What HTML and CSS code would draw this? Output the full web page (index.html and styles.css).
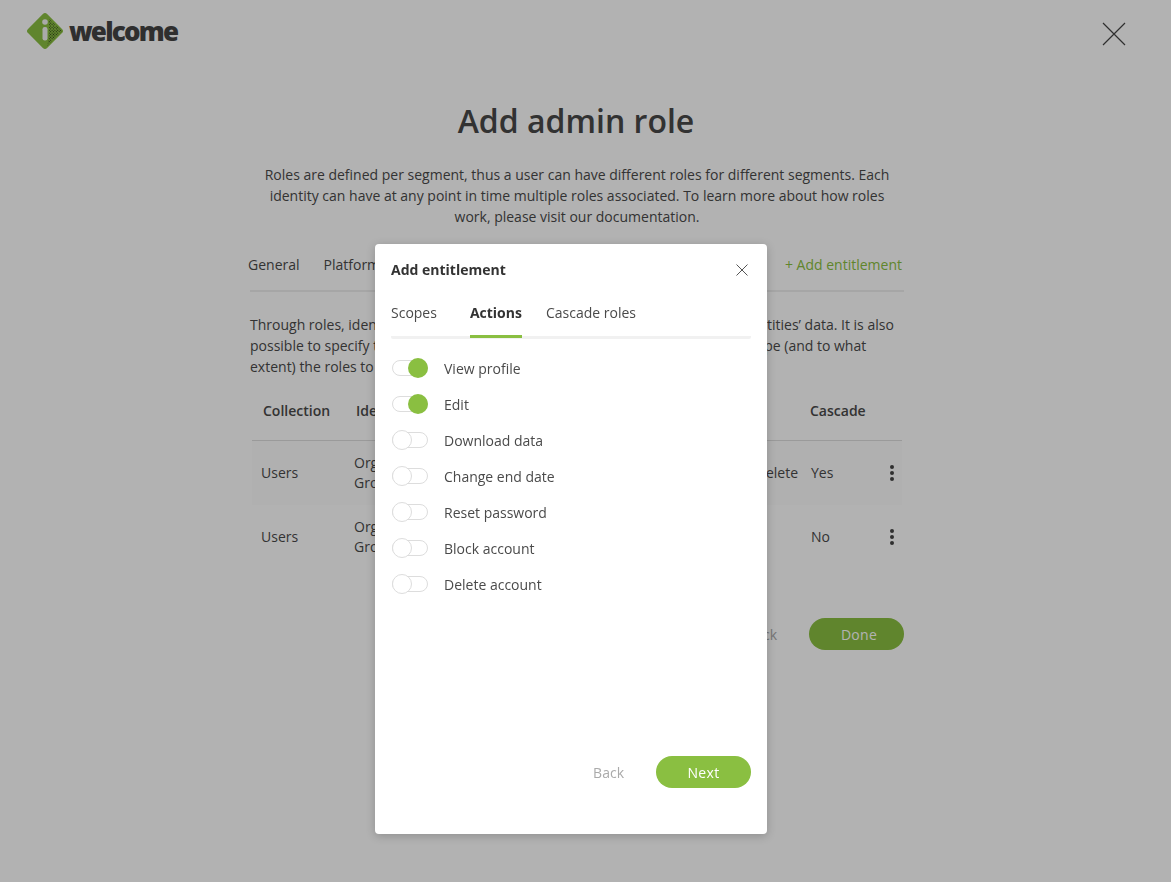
FILE: index.html
```html
<!DOCTYPE html>
<html>
  <head>
    <meta charset="utf-8">
    <meta name="viewport" content="width=device-width">
    <title>Add admin role</title>
    <link rel="stylesheet" href="styles.css">
  </head>
  <body>
    <header class="top-bar">
      <div class="logo">
        <svg class="logo-mark" width="40" height="40" viewBox="0 0 40 40">
          <defs>
            <pattern id="dots" width="2" height="2" patternUnits="userSpaceOnUse">
              <rect width="1" height="1" fill="#2c3d1a"></rect>
            </pattern>
            <clipPath id="right-half">
              <path d="M24 8 L37 20 L22 35 L23 31 L24 20 Z"></path>
            </clipPath>
          </defs>
          <rect x="6.5" y="6.5" width="27" height="27" rx="3" transform="rotate(45 20 20)" fill="#8abf41"></rect>
          <g clip-path="url(#right-half)">
            <rect x="6.5" y="6.5" width="27" height="27" rx="3" transform="rotate(45 20 20)" fill="url(#dots)"></rect>
          </g>
          <circle cx="20" cy="11" r="2.8" fill="#f4f4f4"></circle>
          <rect x="17.5" y="16" width="5" height="13.5" rx="2.2" fill="#f4f4f4"></rect>
        </svg>
        <span class="logo-text">welcome</span>
      </div>
      <button class="page-close" aria-label="Close">
        <svg width="24" height="24" viewBox="0 0 24 24"><path d="M1 1 L23 23 M23 1 L1 23" stroke="#444" stroke-width="1.2" fill="none"></path></svg>
      </button>
    </header>

    <main class="content">
      <h1>Add admin role</h1>
      <p class="intro">Roles are defined per segment, thus a user can have different roles for different segments. Each identity can have at any point in time multiple roles associated. To learn more about how roles work, please visit our documentation.</p>

      <div class="page-tabs">
        <span>General</span>
        <span>Platform</span>
        <span class="add-link">+ Add entitlement</span>
      </div>

      <p class="desc">Through roles, identities can be granted rights to other identities and to all identities’ data. It is also<br>possible to specify the actions each role is allowed to perform on one given scope (and to what<br>extent) the roles to be cascaded.</p>

      <div class="table">
        <div class="row head">
          <div>Collection</div>
          <div>Identity</div>
          <div></div>
          <div>Cascade</div>
          <div></div>
        </div>
        <div class="row shaded">
          <div class="cell-name">Users</div>
          <div>Organization<br>Group</div>
          <div class="cell-actions">View, Edit, Delete</div>
          <div class="cell-cascade">Yes</div>
          <div class="more"><i></i><i></i><i></i></div>
        </div>
        <div class="row">
          <div class="cell-name">Users</div>
          <div>Organization<br>Group</div>
          <div class="cell-actions"></div>
          <div class="cell-cascade">No</div>
          <div class="more"><i></i><i></i><i></i></div>
        </div>
      </div>

      <div class="page-actions">
        <span class="link-back">Back</span>
        <span class="btn btn-done">Done</span>
      </div>
    </main>

    <div class="overlay"></div>

    <section class="modal">
      <div class="modal-head">
        <h2>Add entitlement</h2>
        <svg class="modal-close" width="12" height="12" viewBox="0 0 12 12"><path d="M0.5 0.5 L11.5 11.5 M11.5 0.5 L0.5 11.5" stroke="#555" stroke-width="1" fill="none"></path></svg>
      </div>
      <div class="modal-tabs">
        <span class="tab">Scopes</span>
        <span class="tab active">Actions</span>
        <span class="tab">Cascade roles</span>
      </div>
      <ul class="toggles">
        <li><span class="toggle on"></span>View profile</li>
        <li><span class="toggle on"></span>Edit</li>
        <li><span class="toggle"></span>Download data</li>
        <li><span class="toggle"></span>Change end date</li>
        <li><span class="toggle"></span>Reset password</li>
        <li><span class="toggle"></span>Block account</li>
        <li><span class="toggle"></span>Delete account</li>
      </ul>
      <div class="modal-actions">
        <span class="link-back">Back</span>
        <span class="btn">Next</span>
      </div>
    </section>
  </body>
</html>
```

FILE: styles.css
```css
html, body {
  margin: 0;
  height: 100%;
}

body {
  height: 882px;
  overflow: hidden;
  background-color: #fff;
  color: #4a4a4a;
  font-family: "Open Sans", sans-serif;
  font-size: 14px;
  line-height: 21px;
}

.top-bar {
  display: flex;
  justify-content: space-between;
  height: 64px;
  padding: 11px 45px 0 25px;
  box-sizing: border-box;
}

.logo {
  display: flex;
  align-items: center;
  height: 40px;
  gap: 4px;
}

.logo-text {
  font-size: 26px;
  font-weight: 800;
  letter-spacing: -1.8px;
  color: #444;
  line-height: 42px;
}

.page-close {
  border: 0;
  padding: 0;
  margin-top: 11px;
  height: 24px;
  background: none;
}

.content {
  width: 654px;
  margin-left: 250px;
}

h1 {
  margin: 33px 0 0;
  text-align: center;
  font-size: 32px;
  line-height: 48px;
  font-weight: 600;
  color: #484848;
  padding-right: 2px;
}

.intro {
  width: 640px;
  margin: 19px auto 0;
  text-align: center;
}

.page-tabs {
  display: flex;
  gap: 24px;
  margin: 27px 0 0 -2px;
  padding-right: 2px;
  height: 36px;
}

.add-link {
  margin-left: auto;
  color: #8abf41;
}

.page-tabs + .desc {
  border-top: 2px solid #eee;
  margin: 0;
  padding-top: 22px;
}

.table {
  margin: 9px 2px 0;
}

.row {
  display: grid;
  grid-template-columns: 93px 180px 274px 69px 17px;
  align-items: center;
  height: 64px;
  padding-left: 9px;
  box-sizing: border-box;
  line-height: 20px;
}

.row.head {
  height: 55px;
  padding: 0 0 5px 11px;
  font-weight: 600;
  border-bottom: 1px solid #ddd;
}

.row.shaded {
  background-color: #fcfcfc;
}

.cell-actions {
  text-align: right;
  padding-right: 10px;
}

.cell-cascade {
  padding-left: 3px;
}

.more {
  display: flex;
  flex-direction: column;
  align-items: flex-end;
  gap: 2px;
}

.more i {
  width: 4px;
  height: 4px;
  border-radius: 50%;
  background-color: #444;
}

.page-actions {
  display: flex;
  justify-content: flex-end;
  align-items: center;
  margin-top: 49px;
  gap: 32px;
}

.link-back {
  color: #aaa;
}

.btn {
  display: block;
  width: 95px;
  height: 32px;
  line-height: 34px;
  border-radius: 16px;
  text-align: center;
  letter-spacing: 0.3px;
  background-color: #8abf41;
  color: #fff;
}

.btn-done {
  text-indent: 5px;
}

.overlay {
  position: fixed;
  inset: 0;
  background-color: rgba(0, 0, 0, 0.3);
}

.modal {
  position: absolute;
  left: 375px;
  top: 244px;
  width: 392px;
  height: 590px;
  box-sizing: border-box;
  padding: 15px 16px 16px;
  display: flex;
  flex-direction: column;
  background-color: #fff;
  border-radius: 4px;
  box-shadow: 0 2px 10px rgba(0, 0, 0, 0.2);
}

.modal-head {
  display: flex;
  justify-content: space-between;
  align-items: center;
  height: 20px;
  padding-right: 3px;
}

.modal-close {
  margin-top: 2px;
}

h2 {
  margin: 0;
  font-size: 14px;
  font-weight: 700;
  color: #333;
}

.modal-tabs {
  display: flex;
  gap: 24px;
  margin-top: 22px;
  height: 35px;
  border-bottom: 3px solid #f1f1f1;
  border-radius: 2px;
}

.tab {
  display: block;
  height: 33px;
  padding-top: 1px;
  margin-right: 9px;
}

.tab.active {
  margin-right: 0;
  font-weight: 700;
  color: #333;
  border-bottom: 3px solid #8abf41;
}

.toggles {
  list-style: none;
  margin: 11px 0 0;
  padding: 0;
}

.toggles li {
  display: flex;
  align-items: center;
  height: 36px;
}

.toggle {
  position: relative;
  display: block;
  width: 36px;
  height: 16px;
  margin: 0 16px 0 1px;
  box-sizing: border-box;
  border: 1px solid #ddd;
  border-radius: 8px;
  background-color: #fff;
}

.toggle::after {
  content: "";
  position: absolute;
  top: -3px;
  left: -1px;
  width: 20px;
  height: 20px;
  box-sizing: border-box;
  border: 1px solid #ddd;
  border-radius: 50%;
  background-color: #fff;
}

.toggle.on::after {
  left: 15px;
  border: 0;
  background-color: #8abf41;
}

.modal-actions {
  display: flex;
  justify-content: flex-end;
  align-items: center;
  gap: 32px;
  margin-top: auto;
  margin-bottom: 30px;
}
```
